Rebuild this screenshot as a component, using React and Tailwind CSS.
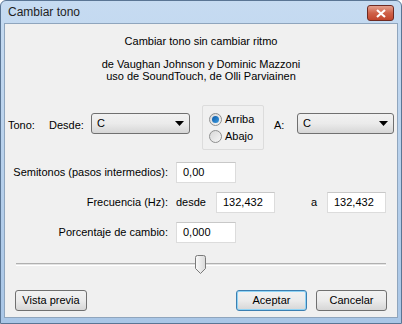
import { useState } from 'react';

const Combo = ({ value, width }) => (
  <div
    className={`${width} h-[21px] flex items-center justify-between px-[5px] rounded-[3px] border border-[#707070] bg-gradient-to-b from-[#f2f2f2] via-[#ebebeb] to-[#d6d6d6]`}
  >
    <span>{value}</span>
    <svg width="9" height="5" viewBox="0 0 9 5">
      <path d="M0 0 L9 0 L4.5 5 Z" fill="#000" />
    </svg>
  </div>
);

const Field = ({ value, width = 'w-[60px]' }) => (
  <div className={`${width} h-[21px] flex items-center px-[6px] bg-white border border-[#dcdcdc] border-t-[#c8c8c8]`}>
    {value}
  </div>
);

const Radio = ({ checked, label, onClick }) => (
  <div className="flex items-center h-[17px] cursor-default" onClick={onClick}>
    <div className="w-[13px] h-[13px] rounded-full border border-[#8e8f8f] bg-gradient-to-br from-[#d8d8d8] to-[#f6f6f6] flex items-center justify-center">
      {checked && (
        <div className="w-[7px] h-[7px] rounded-full bg-gradient-to-br from-[#0d5aa7] to-[#3a9be0]" />
      )}
    </div>
    <span className="ml-[3px] whitespace-nowrap">{label}</span>
  </div>
);

const Button = ({ children, focused }) => (
  <button
    className={`w-[71px] h-[21px] flex items-center justify-center rounded-[3px] border bg-gradient-to-b from-[#f2f2f2] via-[#ebebeb] to-[#d6d6d6] ${
      focused ? 'border-[#3c7fb1] shadow-[inset_0_0_0_1px_#8fd3f5]' : 'border-[#707070]'
    }`}
  >
    {children}
  </button>
);

export default function App() {
  const [up, setUp] = useState(true);

  return (
    <div
      className="w-[402px] h-[324px] flex flex-col bg-gradient-to-b from-[#c6dbf1] to-[#a9c6e6] border border-[#5a7594] rounded-t-[6px] px-[3px] pb-[5px] text-[11px] text-black"
      style={{ fontFamily: '"Liberation Sans", Arial, sans-serif' }}
    >
      {/* title bar */}
      <div className="h-[22px] flex items-center justify-between pl-[4px] pr-[4px]">
        <span className="text-[12px] text-[#1e1e1e]">Cambiar tono</span>
        <div className="w-[27px] h-[16px] mt-[2px] rounded-[3px] border border-[#6d2a22] bg-gradient-to-b from-[#e4a08e] via-[#cf6249] to-[#c1452c] flex items-center justify-center">
          <svg width="10" height="9" viewBox="0 0 10 9">
            <path d="M1 1 L9 8 M9 1 L1 8" stroke="#fff" strokeWidth="2.2" />
          </svg>
        </div>
      </div>

      {/* content */}
      <div className="flex-1 flex flex-col bg-[#f0f0f0] border border-[#8fa5bd]">
        <div className="flex flex-col items-center mt-[10px]">
          <div className="leading-[14px]">Cambiar tono sin cambiar ritmo</div>
          <div className="leading-[12px] mt-[10px]">de Vaughan Johnson y Dominic Mazzoni</div>
          <div className="leading-[12px]">uso de SoundTouch, de Olli Parviainen</div>
        </div>

        {/* tono row */}
        <div className="flex items-start mt-[23px] ml-[3px]">
          <span className="w-[41px] mt-[12px]">Tono:</span>
          <span className="w-[42px] mt-[12px]">Desde:</span>
          <div className="mt-[8px]">
            <Combo value="C" width="w-[99px]" />
          </div>
          <div className="ml-[12px] w-[62px] h-[45px] border border-[#dcdcdc] rounded-[2px] overflow-hidden flex flex-col justify-center pl-[6px]">
            <Radio checked={up} label="Arriba" onClick={() => setUp(true)} />
            <Radio checked={!up} label="Abajo" onClick={() => setUp(false)} />
          </div>
          <span className="ml-[10px] w-[23px] mt-[12px]">A:</span>
          <div className="mt-[8px]">
            <Combo value="C" width="w-[97px]" />
          </div>
        </div>

        {/* semitonos */}
        <div className="flex items-center mt-[12px]">
          <span className="w-[163px] text-right">Semitonos (pasos intermedios):</span>
          <div className="ml-[8px]">
            <Field value="0,00" />
          </div>
        </div>

        {/* frecuencia */}
        <div className="flex items-center mt-[9px]">
          <span className="w-[163px] text-right">Frecuencia (Hz):</span>
          <span className="ml-[8px] w-[40px]">desde</span>
          <Field value="132,432" width="w-[59px]" />
          <span className="ml-[36px] w-[16px]">a</span>
          <Field value="132,432" width="w-[59px]" />
        </div>

        {/* porcentaje */}
        <div className="flex items-center mt-[9px]">
          <span className="w-[163px] text-right">Porcentaje de cambio:</span>
          <div className="ml-[8px]">
            <Field value="0,000" />
          </div>
        </div>

        {/* slider */}
        <div className="relative h-[20px] mt-[11px] mx-[11px]">
          <div className="absolute left-0 right-0 top-[9px] h-[3px] border-t border-[#b0b0b0] border-b border-b-white bg-[#e3e3e3]" />
          <svg className="absolute left-[179px] top-[1px]" width="11" height="19" viewBox="0 0 11 19">
            <defs>
              <linearGradient id="th" x1="0" y1="0" x2="1" y2="0">
                <stop offset="0" stopColor="#fbfbfb" />
                <stop offset="1" stopColor="#d9d9d9" />
              </linearGradient>
            </defs>
            <path
              d="M2.5 0.5 H8.5 Q10.5 0.5 10.5 2.5 V13.5 L5.5 18.5 L0.5 13.5 V2.5 Q0.5 0.5 2.5 0.5 Z"
              fill="url(#th)"
              stroke="#7a7a7a"
            />
          </svg>
        </div>

        {/* buttons */}
        <div className="flex items-center mt-[16px] ml-[10px] mr-[10px]">
          <button className="w-[72px] h-[21px] flex items-center justify-center rounded-[3px] border border-[#707070] bg-gradient-to-b from-[#f2f2f2] via-[#ebebeb] to-[#d6d6d6]">
            Vista previa
          </button>
          <div className="flex-1" />
          <Button focused>Aceptar</Button>
          <div className="w-[9px]" />
          <Button>Cancelar</Button>
        </div>
      </div>
    </div>
  );
}
